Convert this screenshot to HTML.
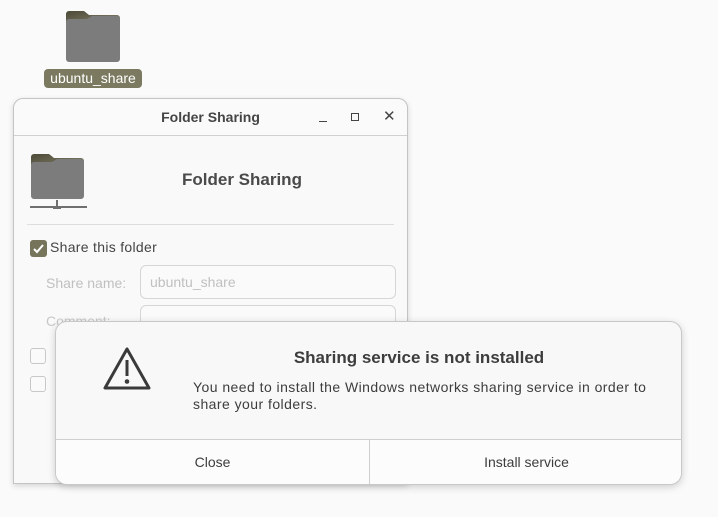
<!DOCTYPE html>
<html><head><meta charset="utf-8"><style>
*{box-sizing:border-box;margin:0;padding:0}
body{width:718px;height:517px;background:#fafafa;font-family:"Liberation Sans","DejaVu Sans",sans-serif;position:relative;overflow:hidden;color:#3d3d3d}
.abs{position:absolute}
.win{left:13px;top:98px;width:395px;height:386px;background:#f9f9f9;border:1px solid #c4c4c4;border-radius:10px 10px 0 0;box-shadow:0 2px 6px rgba(0,0,0,.15)}
.tb{left:0;top:0;width:393px;height:37px;border-bottom:1px solid #d0d0d0;background:#fafafa;border-radius:10px 10px 0 0}
.dlg{left:55px;top:321px;width:627px;height:164px;background:#f8f8f8;border:1px solid #c8c8c8;border-radius:12px;box-shadow:0 2px 8px rgba(0,0,0,.18);overflow:hidden}
.inp{border:1px solid #d6d6d6;border-radius:6px;background:#fafafa}
.cb{width:16px;height:16px;border:1px solid #c8c8c8;border-radius:3px;background:#fafafa}
</style></head><body>
<svg class="abs" style="left:64px;top:10px" width="58" height="54" viewBox="0 0 58 54"><defs><linearGradient id="g" x1="0" y1="0" x2="1" y2="1"><stop offset="0" stop-color="#4c4a38"/><stop offset="1" stop-color="#8c8a70"/></linearGradient></defs><path d="M2 4a3 3 0 0 1 3-3h15l5 4h28a3 3 0 0 1 3 3v8H2z" fill="url(#g)"/><path d="M2 12a3 3 0 0 1 3-3h18l5-3h25a3 3 0 0 1 3 3v40a3 3 0 0 1-3 3H5a3 3 0 0 1-3-3z" fill="#7c7c7c"/></svg>
<div class="abs" style="left:44px;top:69px;width:98px;height:19px;background:#7b7a60;border-radius:4px;color:#fff;font-size:14px;text-align:center;line-height:19px">ubuntu_share</div>
<div class="abs win">
<div class="abs tb"><div class="abs" style="left:0;width:393px;top:10px;text-align:center;font-weight:bold;font-size:14px;color:#454545">Folder Sharing</div>
<div class="abs" style="left:305px;top:22px;width:8px;height:1px;background:#444"></div>
<div class="abs" style="left:337px;top:14px;width:8px;height:8px;border:1px solid #444"></div>
<div class="abs" style="left:369px;top:8px;font-size:15px;color:#444">✕</div></div>
<svg class="abs" style="left:15px;top:54px" width="60" height="58" viewBox="0 0 60 58"><path d="M2 4a3 3 0 0 1 3-3h15l5 4h27a3 3 0 0 1 3 3v8H2z" fill="url(#g)"/><path d="M2 12a3 3 0 0 1 3-3h18l5-3h24a3 3 0 0 1 3 3v34a3 3 0 0 1-3 3H5a3 3 0 0 1-3-3z" fill="#7c7c7c"/><rect x="1" y="53" width="57" height="2" fill="#6f6f6f"/><rect x="27" y="47" width="2" height="7" fill="#6f6f6f"/><rect x="24" y="53" width="8" height="3" fill="#6f6f6f"/></svg>
<div class="abs" style="left:168px;top:71px;font-size:17px;font-weight:bold;color:#4a4a4a">Folder Sharing</div>
<div class="abs" style="left:13px;top:125px;width:367px;height:1px;background:#dedede"></div>
<div class="abs" style="left:16px;top:141px;width:17px;height:17px;background:#76745a;border-radius:3px"><svg width="17" height="17"><path d="M4 9l3 3 6-7" stroke="#fff" stroke-width="2" fill="none"/></svg></div>
<div class="abs" style="left:36px;top:140px;font-size:14px;color:#444;letter-spacing:0.3px">Share this folder</div>
<div class="abs" style="left:32px;top:176px;font-size:14px;color:#c0c0c0">Share name:</div>
<div class="abs inp" style="left:126px;top:166px;width:256px;height:34px"><span class="abs" style="left:9px;top:8px;font-size:14px;color:#c0c0c0">ubuntu_share</span></div>
<div class="abs" style="left:32px;top:214px;font-size:14px;color:#c8c8c8">Comment:</div>
<div class="abs inp" style="left:126px;top:206px;width:256px;height:34px"></div>
<div class="abs cb" style="left:16px;top:249px"></div>
<div class="abs cb" style="left:16px;top:277px"></div>
</div>
<div class="abs dlg">
<svg class="abs" style="left:46px;top:24px" width="50" height="46" viewBox="0 0 50 46"><path d="M25 3L3 42h44z" stroke="#3a3a3a" stroke-width="3" fill="none" stroke-linejoin="round"/><rect x="23.5" y="14" width="3" height="16" fill="#3a3a3a"/><circle cx="25" cy="35.5" r="2.3" fill="#3a3a3a"/></svg>
<div class="abs" style="left:0;width:726px;top:26px;text-align:center;font-size:17px;font-weight:bold;color:#3d3d3d">Sharing service is not installed</div>
<div class="abs" style="left:137px;top:57px;font-size:14px;line-height:17px;color:#3d3d3d;letter-spacing:0.45px">You need to install the Windows networks sharing service in order to<br>share your folders.</div>
<div class="abs" style="left:0;top:117px;width:627px;height:47px;background:#fcfcfc;border-top:1px solid #cfcfcf"></div>
<div class="abs" style="left:313px;top:118px;width:1px;height:46px;background:#cfcfcf"></div>
<div class="abs" style="left:0;width:313px;top:132px;text-align:center;font-size:14px">Close</div>
<div class="abs" style="left:314px;width:313px;top:132px;text-align:center;font-size:14px">Install service</div>
</div>
</body></html>
